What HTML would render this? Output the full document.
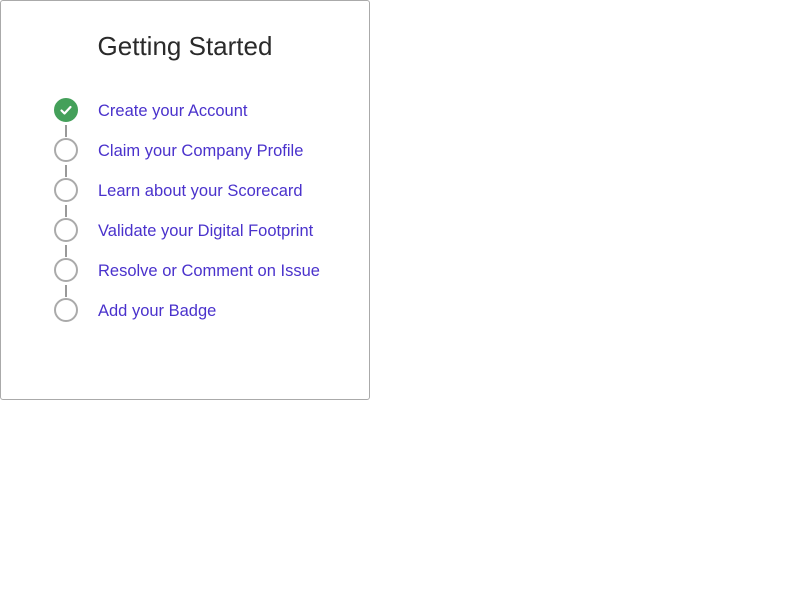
<!DOCTYPE html>
<html><head><style>
body{margin:0;background:#fff;font-family:"Liberation Sans",sans-serif;}
.card{position:absolute;left:0;top:0;width:368px;height:398px;border:1px solid #aaa;border-radius:3px;}
h1{position:absolute;left:0;width:368px;top:30px;margin:0;text-align:center;font-weight:normal;font-size:26px;color:#2a2a2a;}
.c{position:absolute;left:53px;width:20px;height:20px;border:2px solid #aaa;border-radius:50%;background:#fff;}
.c.done{background:#44a05a;border-color:#44a05a;}
.l{position:absolute;left:64px;width:2px;height:12px;background:#999;}
.t{position:absolute;left:97px;font-size:16.5px;color:#4a32cc;line-height:20px;}
</style></head><body>
<div class="card">
<h1>Getting Started</h1>
<div class="c done" style="top:97px"><svg width="20" height="20" viewBox="0 0 20 20"><path d="M5.5 10.5l3 3 6-6.5" stroke="#fff" stroke-width="2.2" fill="none" stroke-linecap="round" stroke-linejoin="round"/></svg></div>
<div class="l" style="top:124px"></div>
<div class="c" style="top:137px"></div>
<div class="l" style="top:164px"></div>
<div class="c" style="top:177px"></div>
<div class="l" style="top:204px"></div>
<div class="c" style="top:217px"></div>
<div class="l" style="top:244px"></div>
<div class="c" style="top:257px"></div>
<div class="l" style="top:284px"></div>
<div class="c" style="top:297px"></div>
<div class="t" style="top:100px">Create your Account</div>
<div class="t" style="top:140px">Claim your Company Profile</div>
<div class="t" style="top:180px">Learn about your Scorecard</div>
<div class="t" style="top:220px">Validate your Digital Footprint</div>
<div class="t" style="top:260px">Resolve or Comment on Issue</div>
<div class="t" style="top:300px">Add your Badge</div>
</div>
</body></html>
